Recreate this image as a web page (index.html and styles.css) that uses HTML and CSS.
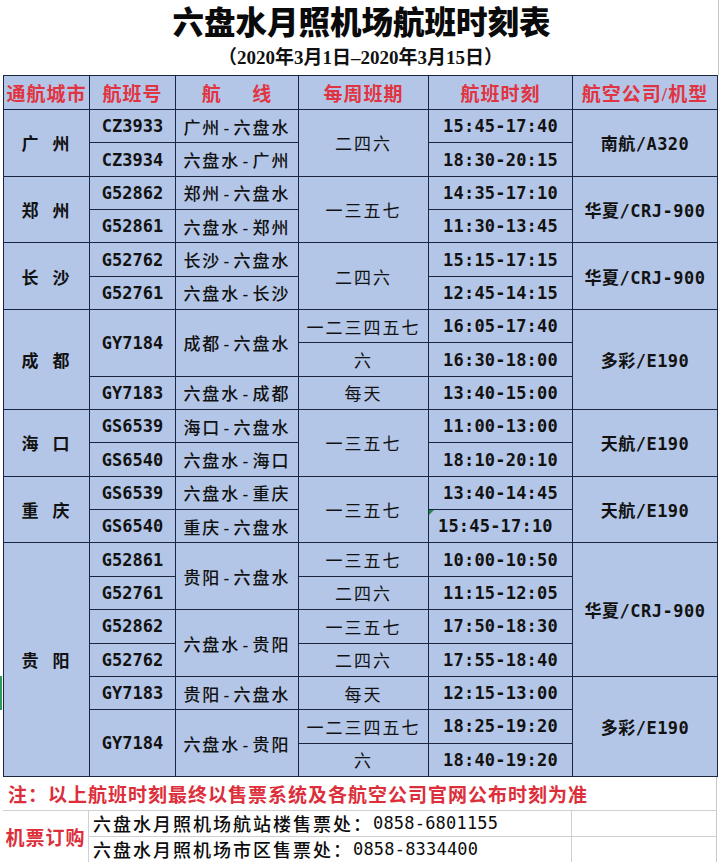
FILE: index.html
```html
<!DOCTYPE html>
<html lang="zh-CN">
<head>
<meta charset="utf-8">
<title>六盘水月照机场航班时刻表</title>
<link rel="stylesheet" href="styles.css">
</head>
<body>
<div class="sheet">
  <header class="title-block">
    <h1 class="title">六盘水月照机场航班时刻表</h1>
    <p class="subtitle">（2020年3月1日–2020年3月15日）</p>
  </header>

  <table class="schedule">
    <colgroup>
      <col class="c-city"><col class="c-code"><col class="c-route"><col class="c-week"><col class="c-time"><col class="c-air">
    </colgroup>
    <thead>
      <tr class="head">
        <th>通航城市</th><th>航班号</th><th>航&emsp;&ensp;线</th><th>每周班期</th><th>航班时刻</th><th>航空公司/机型</th>
      </tr>
    </thead>
    <tbody>
      <tr><td class="city" rowspan="2">广 州</td><td class="code">CZ3933</td><td class="route">广州-六盘水</td><td class="week" rowspan="2">二四六</td><td class="time">15:45-17:40</td><td class="air" rowspan="2">南航/A320</td></tr>
      <tr><td class="code">CZ3934</td><td class="route">六盘水-广州</td><td class="time">18:30-20:15</td></tr>

      <tr><td class="city" rowspan="2">郑 州</td><td class="code">G52862</td><td class="route">郑州-六盘水</td><td class="week" rowspan="2">一三五七</td><td class="time">14:35-17:10</td><td class="air" rowspan="2">华夏/CRJ-900</td></tr>
      <tr><td class="code">G52861</td><td class="route">六盘水-郑州</td><td class="time">11:30-13:45</td></tr>

      <tr><td class="city" rowspan="2">长 沙</td><td class="code">G52762</td><td class="route">长沙-六盘水</td><td class="week" rowspan="2">二四六</td><td class="time">15:15-17:15</td><td class="air" rowspan="2">华夏/CRJ-900</td></tr>
      <tr><td class="code">G52761</td><td class="route">六盘水-长沙</td><td class="time">12:45-14:15</td></tr>

      <tr><td class="city" rowspan="3">成 都</td><td class="code" rowspan="2">GY7184</td><td class="route" rowspan="2">成都-六盘水</td><td class="week">一二三四五七</td><td class="time">16:05-17:40</td><td class="air" rowspan="3">多彩/E190</td></tr>
      <tr><td class="week">六</td><td class="time">16:30-18:00</td></tr>
      <tr><td class="code">GY7183</td><td class="route">六盘水-成都</td><td class="week">每天</td><td class="time">13:40-15:00</td></tr>

      <tr><td class="city" rowspan="2">海 口</td><td class="code">GS6539</td><td class="route">海口-六盘水</td><td class="week" rowspan="2">一三五七</td><td class="time">11:00-13:00</td><td class="air" rowspan="2">天航/E190</td></tr>
      <tr><td class="code">GS6540</td><td class="route">六盘水-海口</td><td class="time">18:10-20:10</td></tr>

      <tr><td class="city" rowspan="2">重 庆</td><td class="code">GS6539</td><td class="route">六盘水-重庆</td><td class="week" rowspan="2">一三五七</td><td class="time">13:40-14:45</td><td class="air" rowspan="2">天航/E190</td></tr>
      <tr><td class="code">GS6540</td><td class="route">重庆-六盘水</td><td class="time time-left flagged">15:45-17:10</td></tr>

      <tr><td class="city" rowspan="7">贵 阳</td><td class="code">G52861</td><td class="route" rowspan="2">贵阳-六盘水</td><td class="week">一三五七</td><td class="time">10:00-10:50</td><td class="air" rowspan="4">华夏/CRJ-900</td></tr>
      <tr><td class="code">G52761</td><td class="week">二四六</td><td class="time">11:15-12:05</td></tr>
      <tr><td class="code">G52862</td><td class="route" rowspan="2">六盘水-贵阳</td><td class="week">一三五七</td><td class="time">17:50-18:30</td></tr>
      <tr><td class="code">G52762</td><td class="week">二四六</td><td class="time">17:55-18:40</td></tr>
      <tr><td class="code">GY7183</td><td class="route">贵阳-六盘水</td><td class="week">每天</td><td class="time">12:15-13:00</td><td class="air" rowspan="3">多彩/E190</td></tr>
      <tr><td class="code" rowspan="2">GY7184</td><td class="route" rowspan="2">六盘水-贵阳</td><td class="week">一二三四五七</td><td class="time">18:25-19:20</td></tr>
      <tr><td class="week">六</td><td class="time">18:40-19:20</td></tr>
    </tbody>
  </table>

  <div class="footer">
    <div class="note">注：以上航班时刻最终以售票系统及各航空公司官网公布时刻为准</div>
    <div class="buy">机票订购</div>
    <div class="ticket t1">六盘水月照机场航站楼售票处：<span class="num">0858-6801155</span></div>
    <div class="blank b1"></div>
    <div class="ticket t2">六盘水月照机场市区售票处：<span class="num">0858-8334400</span></div>
    <div class="blank b2"></div>
  </div>
</div>
<div class="row-mark"></div>
</body>
</html>
```

FILE: styles.css
```css
html, body {
  margin: 0;
  padding: 0;
  background: #ffffff;
}

body {
  width: 720px;
  height: 862px;
  overflow: hidden;
  position: relative;
  font-family: "Noto Sans CJK SC", sans-serif;
  color: #111111;
}

.sheet {
  margin-left: 3px;
  width: 714px;
}

.title-block {
  height: 75px;
  box-sizing: border-box;
  padding-top: 7px;
  display: flex;
  flex-direction: column;
  align-items: center;
  border-right: 1px solid #c8c8c8;
  width: 716px;
}

.title {
  margin: 0;
  font-family: "Liberation Serif", "Noto Sans CJK SC", serif;
  font-weight: 900;
  font-size: 31.5px;
  line-height: 34px;
  color: #0a0a0a;
  padding-left: 2px;
}

.subtitle {
  margin: 5px 0 0 0;
  font-family: "Liberation Serif", "Noto Sans CJK SC", serif;
  font-weight: 700;
  font-size: 19px;
  line-height: 24px;
  color: #111111;
}

.schedule {
  border-collapse: collapse;
  table-layout: fixed;
  width: 714px;
  background: #b4c6e7;
}

.c-city { width: 86px; }
.c-code { width: 86px; }
.c-route { width: 123px; }
.c-week { width: 130px; }
.c-time { width: 144px; }
.c-air { width: 145px; }

.schedule th,
.schedule td {
  border: 1px solid #1c2540;
  padding: 0;
  text-align: center;
  vertical-align: middle;
  white-space: nowrap;
  overflow: hidden;
}

.head {
  height: 34px;
}

.head th {
  font-family: "Liberation Serif", "Noto Sans CJK SC", serif;
  font-weight: 700;
  font-size: 19px;
  color: #e13442;
  letter-spacing: 1px;
}

.schedule tbody tr {
  height: 33.35px;
}

.schedule td {
  font-family: "DejaVu Sans Mono", "Noto Sans CJK SC", monospace;
  font-size: 17px;
  color: #121212;
}

.city {
  font-weight: 700;
  letter-spacing: 2px;
}

.code {
  font-weight: 700;
  letter-spacing: 0;
}

.route {
  font-weight: 500;
  letter-spacing: 2px;
}

.week {
  font-weight: 400;
  letter-spacing: 2px;
}

.time {
  font-weight: 700;
  letter-spacing: 0.2px;
}

.schedule td.time-left {
  text-align: left;
  padding-left: 9px;
}

.flagged {
  position: relative;
}

.flagged::before {
  content: "";
  position: absolute;
  top: 0;
  left: 0;
  border-top: 5px solid #1f8a4a;
  border-right: 5px solid transparent;
}

.air {
  font-weight: 700;
  letter-spacing: 0.5px;
}

.footer {
  display: grid;
  grid-template-columns: 86px 483px 145px;
  grid-template-rows: 34px 26px 26px;
  width: 714px;
  box-sizing: border-box;
  border-right: 1px solid #c8c8c8;
}

.note {
  grid-column: 1 / 4;
  display: flex;
  align-items: center;
  padding-left: 5px;
  font-family: "Liberation Serif", "Noto Sans CJK SC", serif;
  font-weight: 700;
  font-size: 19px;
  letter-spacing: 1px;
  color: #dc2f3b;
  border-bottom: 1px solid #d0d0d0;
  white-space: nowrap;
}

.buy {
  grid-column: 1;
  grid-row: 2 / 4;
  display: flex;
  align-items: center;
  justify-content: center;
  font-family: "Liberation Serif", "Noto Sans CJK SC", serif;
  font-weight: 700;
  font-size: 19px;
  letter-spacing: 1px;
  color: #dc2f3b;
  border-right: 1px solid #d0d0d0;
}

.ticket {
  grid-column: 2;
  display: flex;
  align-items: center;
  padding-left: 4px;
  font-size: 18px;
  font-weight: 500;
  letter-spacing: 2px;
  color: #0c0c0c;
  white-space: nowrap;
  border-right: 1px solid #d0d0d0;
}

.ticket .num {
  font-family: "DejaVu Sans Mono", monospace;
  font-size: 17px;
  letter-spacing: 0.2px;
}

.t1 { grid-row: 2; border-bottom: 1px solid #d0d0d0; }
.t2 { grid-row: 3; border-bottom: 1px solid #8a8a8a; }

.blank { grid-column: 3; }
.b1 { grid-row: 2; border-bottom: 1px solid #d0d0d0; }
.b2 { grid-row: 3; border-bottom: 1px solid #8a8a8a; }

.row-mark {
  position: absolute;
  left: 0;
  top: 676px;
  width: 2px;
  height: 34px;
  background: #2e9a57;
}
```
